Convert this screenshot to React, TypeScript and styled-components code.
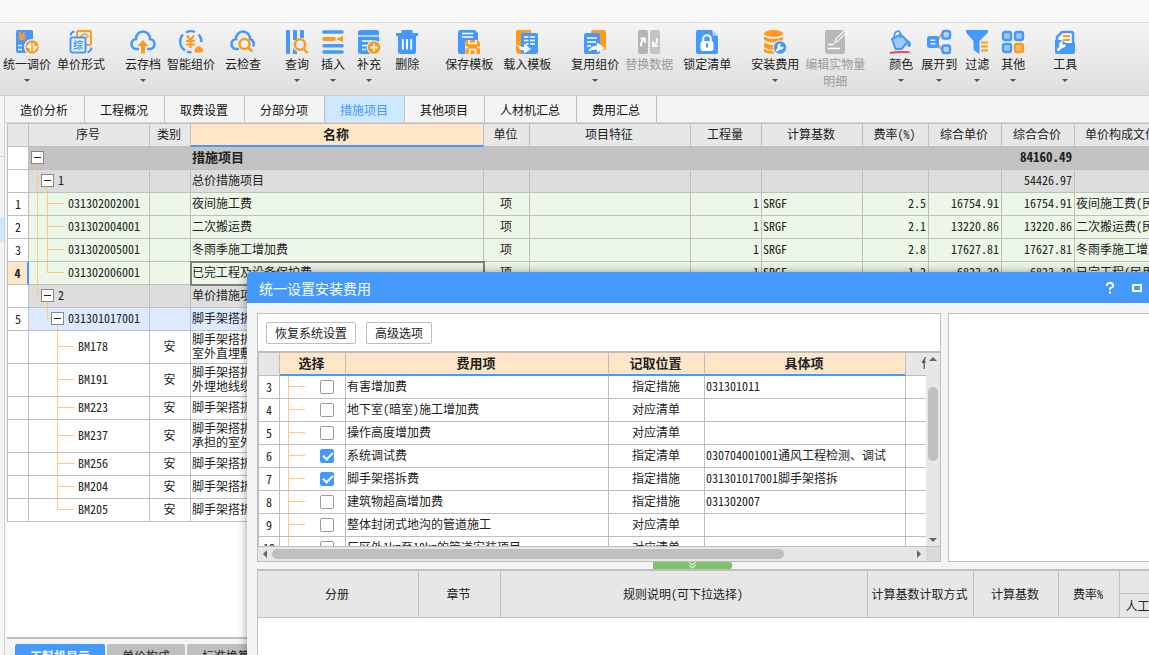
import React from 'react';
import styled, { createGlobalStyle, css } from 'styled-components';

const BLUE = '#4499ff';
const ORANGE = '#ff9a1f';
const LINE = '#bfbfbf';
const PEACH = '#ffe6c8';
const UI = '"Noto Sans CJK SC", sans-serif';
const GRID = '"Noto Sans Mono CJK SC", "Noto Sans CJK SC", monospace';

const GlobalStyle = createGlobalStyle`
  * { box-sizing: border-box; }
  body { margin: 0; overflow: hidden; font: 12px/17px ${UI}; color: #222; background: #f4f4f4; }
  button, input { font: inherit; color: inherit; margin: 0; }
`;

const App = styled.div`
  position: relative;
  display: flex;
  flex-direction: column;
  height: 100vh;
  overflow: hidden;
`;

const TitleStrip = styled.div`
  flex: none;
  height: 23px;
  background: #f8f8f8;
  border-bottom: 1px solid #d8d8d8;
`;

/* ---------- ribbon ---------- */

const Ribbon = styled.div`
  flex: none;
  display: flex;
  align-items: flex-start;
  height: 73px;
  padding: 7px 0 0 3px;
  overflow: hidden;
  background: linear-gradient(#f4f4f4, #dedede);
  border-bottom: 1px solid #cbcbcb;
`;

const RibbonButton = styled.button<{ $lead: number }>`
  flex: none;
  display: flex;
  flex-direction: column;
  align-items: center;
  margin-left: ${(p) => p.$lead}px;
  padding: 0;
  border: 0;
  background: none;
  line-height: 17px;
  white-space: pre;
  &:disabled { color: #9a9a9a; }
`;

const RibbonIcon = styled.svg`
  display: block;
  width: 24px;
  height: 24px;
  margin-bottom: 1px;
  overflow: visible;
`;

const Caret = styled.span`
  margin-top: 7px;
  border: 3px solid transparent;
  border-top-color: #555;
  border-bottom: 0;
`;

const icons: Record<string, React.ReactNode> = {
  adjust: (
    <>
      <rect x="1" y="0" width="17" height="23" rx="2" fill={BLUE} />
      <path d="M4 2l3 3.500L10 2M7 5.500v5M3.500 6h7M3.500 8.500h7" stroke={ORANGE} strokeWidth="1.800" fill="none" />
      <path d="M3 15.500h4M3 19.500h4" stroke="#fff" strokeWidth="1.400" />
      <circle cx="17" cy="17" r="8" fill="#efefef" />
      <circle cx="17" cy="17" r="6.800" fill={ORANGE} />
      <path d="M15.500 13v8M15.500 13l-3 4h3M18.500 21v-8M18.500 21l3-4h-3" stroke="#fff" strokeWidth="1.500" fill="#fff" />
    </>
  ),
  form: (
    <>
      <rect x="8" y="1" width="14" height="14" rx="1.500" fill="none" stroke={ORANGE} strokeWidth="2" />
      <path d="M11 7l4.500-3.500L20 7M12.500 7.500h6" stroke={ORANGE} strokeWidth="1.500" fill="none" />
      <rect x="1.500" y="7.500" width="15" height="15" rx="2" fill="#eef3fa" stroke={BLUE} strokeWidth="2" />
      <text x="4" y="19" fontSize="10" fontWeight="700" fill={BLUE} fontFamily={UI}>综</text>
      <path d="M1.500 5.500Q2 2 5.500 1.500M22.500 17.500Q22 21.500 18.500 22.500" stroke={BLUE} strokeWidth="2" fill="none" />
    </>
  ),
  cloudUp: (
    <>
      <path d="M8 19H6A5 5 0 0 1 5 9A7 7.500 0 0 1 19 9A5 5 0 0 1 18 19H16" fill="none" stroke={BLUE} strokeWidth="2.600" />
      <path d="M12 10l5.500 6H14v7.500h-4V16H6.500z" fill={ORANGE} />
    </>
  ),
  smart: (
    <>
      <path d="M6 20.500A10.500 10.500 0 0 1 4 4.500M7 2.500A10.500 10.500 0 0 1 16 2M19.500 4.500A10.500 10.500 0 0 1 22.500 12M8 21.700A10.500 10.500 0 0 0 12.500 22.300" fill="none" stroke={BLUE} strokeWidth="2.400" />
      <path d="M8 5.500l3.500 4.500L15 5.500M11.500 10v8M7 11h9M7 14.500h9" stroke={ORANGE} strokeWidth="2.200" fill="none" />
      <path d="M16.500 22.500a2.500 2.500 0 0 1 .5-4.500a3 3 0 0 1 5.500 0a2.500 2.500 0 0 1 .5 4.500z" fill={ORANGE} />
    </>
  ),
  cloudSearch: (
    <>
      <path d="M8 19H6A5 5 0 0 1 5 9A7 7.500 0 0 1 19 9A5 5 0 0 1 22 16.500" fill="none" stroke={BLUE} strokeWidth="2.600" />
      <circle cx="13.500" cy="14" r="5" fill="#f1f1f1" stroke={ORANGE} strokeWidth="2.500" />
      <path d="M17 17.500l4.500 4" stroke={ORANGE} strokeWidth="2.600" />
    </>
  ),
  query: (
    <>
      <rect x="1" y="0" width="4" height="24" rx="1" fill={BLUE} />
      <rect x="8" y="0" width="4" height="10" rx="1" fill={BLUE} />
      <rect x="15" y="0" width="4" height="8" rx="1" fill={BLUE} />
      <path d="M8 18.500v5.500h4v-2.500z" fill={BLUE} />
      <circle cx="15" cy="14.500" r="5.200" fill="none" stroke={ORANGE} strokeWidth="2.400" />
      <path d="M18.500 18.500l4 4.500" stroke={ORANGE} strokeWidth="2.600" />
    </>
  ),
  insert: (
    <>
      <path d="M3 2h18M3 15.700h18M3 22h18" stroke={BLUE} strokeWidth="3.600" strokeLinecap="round" />
      <path d="M3 9h10" stroke={ORANGE} strokeWidth="3.800" strokeLinecap="round" />
      <path d="M15 9l7-3.300v6.600z" fill={ORANGE} />
    </>
  ),
  supplement: (
    <>
      <rect x="1" y="0" width="21" height="24" rx="2.500" fill={BLUE} />
      <path d="M1 6h21" stroke="#f0f0f0" strokeWidth="1.300" />
      <path d="M5 11h10M5 15.500h5M5 19.500h4" stroke="#fff" strokeWidth="1.500" />
      <circle cx="17" cy="17.500" r="7.300" fill="#eee" />
      <circle cx="17" cy="17.500" r="6.300" fill={ORANGE} />
      <path d="M17 14v7M13.500 17.500h7" stroke="#fff" strokeWidth="1.900" />
    </>
  ),
  trash: (
    <>
      <path d="M1 4.500h22M6.500 1.500h11" stroke={BLUE} strokeWidth="3" />
      <path d="M3 4h18v17.500a2.500 2.500 0 0 1-2.500 2.500h-13A2.500 2.500 0 0 1 3 21.500z" fill={BLUE} />
      <path d="M7.800 9v10.500M12 9v10.500M16.200 9v10.500" stroke="#fff" strokeWidth="1.800" />
    </>
  ),
  save: (
    <>
      <path d="M3 0h15l3 3v9H8v12H3a2 2 0 0 1-2-2V2a2 2 0 0 1 2-2z" fill={BLUE} />
      <path d="M5 3.500h11M5 7h11" stroke="#fff" strokeWidth="1.500" />
      <path d="M8.500 10h12l2.500 2.500V24H8.500z" fill={ORANGE} />
      <path d="M12 10v3.500h7V10M8 17.500h3M20 17.500h3M12.500 24v-4.500h6V24" stroke="#fff" strokeWidth="1.600" fill="none" />
    </>
  ),
  load: (
    <>
      <path d="M3 0h13v24H5a4 4 0 0 1-4-4V2a2 2 0 0 1 2-2z" fill={ORANGE} />
      <rect x="6" y="3" width="17" height="21" rx="2" fill={BLUE} />
      <path d="M9 7h4.500M15 7h5M9 10.500h4.500M15 10.500h5M11 14h2.500M15 14h5" stroke="#fff" strokeWidth="1.600" />
      <path d="M2 13q1 4 7 4v-3.500l7 5.500-7 4.500v-3q-6 0-7-7.500z" fill="#fff" />
    </>
  ),
  reuse: (
    <>
      <rect x="8" y="0" width="15" height="20" rx="2" fill={ORANGE} />
      <rect x="1" y="3" width="16" height="21" rx="2" fill={BLUE} />
      <path d="M4 8h10M4 12h9M4 16h4" stroke="#fff" strokeWidth="1.600" />
      <path d="M5 21.500q3-6 9-6v-3l8 5.500-8 4.500v-3q-5 0-9 2z" fill="#fff" />
    </>
  ),
  replace: (
    <>
      <rect x="1" y="0" width="10" height="24" rx="2" fill="#b5b5b5" />
      <rect x="13" y="0" width="10" height="24" rx="2" fill="#c4c4c4" />
      <path d="M4 16.500q-.5-5 3-7.500M3.500 8.500H8V13M20 8q.5 5-3 7.500M20.500 16H16v-4.500" stroke="#fff" strokeWidth="1.900" fill="none" />
    </>
  ),
  lock: (
    <>
      <path d="M3 0h13.500L23 6.500V22a2 2 0 0 1-2 2H3a2 2 0 0 1-2-2V2a2 2 0 0 1 2-2z" fill={BLUE} />
      <path d="M17.500 0v5.500H23z" fill="#b9d8fb" />
      <path d="M8.200 12V9a3.800 3.800 0 0 1 7.600 0v3" fill="none" stroke="#fff" strokeWidth="2" />
      <rect x="5.500" y="11" width="13" height="10" rx="2.500" fill="#fff" />
      <path d="M12 13.500v4" stroke={BLUE} strokeWidth="2" />
    </>
  ),
  install: (
    <>
      <ellipse cx="10.500" cy="3.500" rx="9.500" ry="3.500" fill={ORANGE} />
      <path d="M1 6.500q9.500 5 19 0v3.500q-9.500 5-19 0zM1 12.500q9.500 5 19 0l-9 7.500q-6 0-10-3zM1 18.500q4 2.500 9 2.500l1 3q-6 0-10-2z" fill={ORANGE} />
      <circle cx="17" cy="17.500" r="7.200" fill="#ececec" />
      <circle cx="17" cy="17.500" r="6.200" fill={BLUE} />
      <path d="M13.500 21l3.500-3.500" stroke="#fff" strokeWidth="2.400" />
      <path d="M20.500 16.500a3 3 0 1 1-2.500-2.800l-1.200 2 1.500 1.500z" fill="#fff" />
    </>
  ),
  edit: (
    <>
      <rect x="2" y="0" width="20" height="24" rx="2.500" fill="#b8b8b8" />
      <path d="M5 14.500h6M5 18.500h12" stroke="#fff" strokeWidth="1.700" />
      <path d="M12 12.500l1-3.500L21 1l2 2-8 8z" fill="#b8b8b8" stroke="#f4f4f4" strokeWidth="1.300" />
    </>
  ),
  color: (
    <>
      <path d="M3 9L11.500 4.500l7.500 7-6.500 7.500H6.500z" fill="#9ccafb" stroke={BLUE} strokeWidth="2" strokeLinejoin="round" />
      <path d="M5 7.500Q5.500 1 9.500 1.200Q12 1.500 11.500 8" fill="none" stroke={BLUE} strokeWidth="1.800" />
      <path d="M20 11q2.800 4 .3 5.800-3-1-.3-5.800z" fill={BLUE} stroke={BLUE} />
      <path d="M1 22.500h21" stroke="#bdbdbd" strokeWidth="2" />
      <path d="M1 23Q9 21.500 20 22" stroke="#f0404a" strokeWidth="1.700" fill="none" />
    </>
  ),
  expand: (
    <>
      <path d="M10 10l5-6M10 14l5 6" stroke={ORANGE} strokeWidth="2" />
      <rect x="0" y="6" width="12" height="12" rx="2.500" fill={BLUE} />
      <path d="M3.500 10.300h5M3.500 13.700h5" stroke="#dcecff" strokeWidth="1.500" />
      <rect x="15.500" y="1" width="7.500" height="7.500" rx="2" fill="#b5d7fc" stroke={BLUE} strokeWidth="2.400" />
      <rect x="15.500" y="15.500" width="7.500" height="7.500" rx="2" fill="#b5d7fc" stroke={BLUE} strokeWidth="2.400" />
    </>
  ),
  filter: (
    <>
      <path d="M1 0h22v2.500L14.500 11v13L8.500 20v-9L1 2.500z" fill={BLUE} />
      <path d="M16 12.500h7M16 16.500h7M16 20.500h7" stroke={ORANGE} strokeWidth="1.900" />
    </>
  ),
  other: (
    <>
      <rect x="2" y="2" width="8" height="8" rx="2" fill="#9cc8fb" stroke={BLUE} strokeWidth="2.400" />
      <rect x="14" y="2" width="8" height="8" rx="2" fill="#9cc8fb" stroke={BLUE} strokeWidth="2.400" />
      <rect x="2" y="14" width="8" height="8" rx="2" fill="#9cc8fb" stroke={BLUE} strokeWidth="2.400" />
      <rect x="14" y="14" width="8" height="8" rx="2" fill="#ffc37a" stroke={ORANGE} strokeWidth="2.400" />
    </>
  ),
  tools: (
    <>
      <path d="M4 11V7l5-5h9a2 2 0 0 1 2 2v10" fill="#fff" stroke={BLUE} strokeWidth="2.600" />
      <path d="M10 6h7M10 10h7" stroke={ORANGE} strokeWidth="1.900" />
      <path d="M2 10h6l5 3h9v8.500a2.500 2.500 0 0 1-2.500 2.500h-15A2.500 2.500 0 0 1 2 21.500z" fill={BLUE} />
      <path d="M4.500 20.500l4-4" stroke="#fff" strokeWidth="2.600" />
      <path d="M12.500 14a3.200 3.200 0 1 1-3-2.500v2.500l1 1z" fill="#fff" />
    </>
  ),
};

type Command = { icon: string; label: string; lead: number; menu?: boolean; off?: boolean };
const commands: Command[] = [
  { icon: 'adjust', label: '统一调价', lead: 0, menu: true },
  { icon: 'form', label: '单价形式', lead: 6 },
  { icon: 'cloudUp', label: '云存档', lead: 20, menu: true },
  { icon: 'smart', label: '智能组价', lead: 6 },
  { icon: 'cloudSearch', label: '云检查', lead: 10 },
  { icon: 'query', label: '查询', lead: 24, menu: true },
  { icon: 'insert', label: '插入', lead: 12, menu: true },
  { icon: 'supplement', label: '补充', lead: 12, menu: true },
  { icon: 'trash', label: '删除', lead: 14 },
  { icon: 'save', label: '保存模板', lead: 26 },
  { icon: 'load', label: '载入模板', lead: 10 },
  { icon: 'reuse', label: '复用组价', lead: 20, menu: true },
  { icon: 'replace', label: '替换数据', lead: 6, off: true },
  { icon: 'lock', label: '锁定清单', lead: 10 },
  { icon: 'install', label: '安装费用', lead: 20, menu: true },
  { icon: 'edit', label: '编辑实物量\n明细', lead: 6, off: true },
  { icon: 'color', label: '颜色', lead: 24, menu: true },
  { icon: 'expand', label: '展开到', lead: 8, menu: true },
  { icon: 'filter', label: '过滤', lead: 8, menu: true },
  { icon: 'other', label: '其他', lead: 12, menu: true },
  { icon: 'tools', label: '工具', lead: 28, menu: true },
];

/* ---------- workspace ---------- */

const Workspace = styled.div`
  flex: 1;
  display: flex;
  min-height: 0;
`;

const SideRail = styled.aside`
  flex: none;
  width: 5px;
  border-right: 1px solid #d0d0d0;
`;
const RailHead = styled.div`
  height: 61px;
  border-bottom: 1px solid #d0d0d0;
`;
const RailCurrent = styled.div`
  height: 25px;
  margin-top: 60px;
  background: #cde8ff;
`;

const Main = styled.main`
  flex: 1;
  min-width: 0;
  display: flex;
  flex-direction: column;
`;

const Tabs = styled.nav`
  flex: none;
  display: flex;
  height: 27px;
  border-bottom: 1px solid #d4d4d4;
`;
const Tab = styled.button<{ $active?: boolean }>`
  flex: none;
  padding: 0 16px 0 15px;
  border: 0;
  border-right: 1px solid ${LINE};
  background: ${(p) => (p.$active ? '#cde8ff' : '#f4f4f4')};
  color: ${(p) => (p.$active ? BLUE : '#111')};
`;

const Sheet = styled.section`
  flex: 1;
  min-height: 0;
  margin-left: 2px;
  overflow: hidden;
  background: #fff;
  border-bottom: 2px solid ${LINE};
`;

const Table = styled.table`
  table-layout: fixed;
  width: 0;
  border-spacing: 0;
  border-left: 1px solid ${LINE};
  font: 12px/14px ${GRID};
`;
const SheetTable = styled(Table)`
  border-top: 1px solid ${LINE};
`;

const Th = styled.th<{ $hot?: boolean }>`
  height: 23px;
  padding: 0 2px 2px 0;
  overflow: hidden;
  white-space: nowrap;
  font-weight: 400;
  background: #e7e7e7;
  border-right: 1px solid ${LINE};
  border-bottom: 1px solid ${LINE};
  ${(p) => p.$hot && css`
    font-size: 13px;
    font-weight: 700;
    background: ${PEACH};
    border-bottom: 2px solid ${BLUE};
  `}
`;

type Tone = 'root' | 'group' | 'item' | 'current' | 'plain';
const tones: Record<Tone, string> = {
  root: '#c3c3c3', group: '#dddddd', item: '#ecf7e8', current: '#dde9ff', plain: '#ffffff',
};

const Tr = styled.tr<{ $tone?: Tone; $tall?: boolean }>`
  height: ${(p) => (p.$tall ? 33 : 23)}px;
  background: ${(p) => tones[p.$tone ?? 'plain']};
  ${(p) => p.$tone === 'root' && 'font-size: 13px; font-weight: 700;'}
`;

const Td = styled.td<{ $align?: string; $selected?: boolean }>`
  padding: 0 2px 2px 1px;
  overflow: hidden;
  white-space: pre;
  text-align: ${(p) => p.$align ?? 'left'};
  border-right: 1px solid ${LINE};
  border-bottom: 1px solid ${LINE};
  ${(p) => p.$selected && 'outline: 2px solid #7f7f7f; outline-offset: -1px;'}
`;

const RowHead = styled.th<{ $active?: boolean }>`
  padding: 0;
  font-weight: ${(p) => (p.$active ? 700 : 400)};
  background: ${(p) => (p.$active ? PEACH : '#fff')};
  border-right: ${(p) => (p.$active ? `2px solid ${BLUE}` : `1px solid ${LINE}`)};
  border-bottom: 1px solid ${LINE};
`;

const TreeTd = styled(Td)`
  padding: 0;
`;
const Tree = styled.div<{ $tall?: boolean }>`
  display: flex;
  align-items: center;
  height: ${(p) => (p.$tall ? 32 : 22)}px;
  padding-left: 2px;
`;
const Code = styled.span`
  margin-bottom: 2px;
`;

type GuideKind = 'none' | 'through' | 'tee' | 'end';
const Guide = styled.span<{ $kind: GuideKind }>`
  align-self: stretch;
  width: 10px;
  background-repeat: no-repeat;
  background-image: linear-gradient(#ffc97d, #ffc97d), linear-gradient(#ffc97d, #ffc97d);
  background-position: 6px 0, 6px calc(50% - 1px);
  background-size:
    ${(p) => (p.$kind === 'none' ? '0 0' : p.$kind === 'end' ? '1px 50%' : '1px 100%')},
    ${(p) => (p.$kind === 'tee' || p.$kind === 'end' ? '4px 1px' : '0 0')};
`;
const Dash = styled.span`
  width: 13px;
  height: 1px;
  margin: 0 4px 1px 0;
  background: #ffc97d;
`;
const Branch = styled.span`
  align-self: stretch;
  display: flex;
  align-items: center;
  width: 13px;
  margin-right: 4px;
  background: linear-gradient(#ffc97d, #ffc97d) no-repeat 6px 100% / 1px 50%;
`;
const Toggle = styled.button`
  width: 13px;
  height: 13px;
  margin-bottom: 1px;
  padding: 0;
  border: 1px solid #888;
  background: linear-gradient(#222, #222) no-repeat center / 7px 1px #fff;
`;

type Row = {
  no?: string; code?: string; guides: GuideKind[]; branch?: boolean; tone: Tone; tall?: boolean;
  kind?: string; name: string; unit?: string; qty?: string; base?: string; rate?: string;
  price?: string; total?: string; file?: string; selected?: boolean;
};
const rows: Row[] = [
  { guides: [], branch: true, tone: 'root', name: '措施项目', total: '84160.49' },
  { code: '1', guides: ['tee'], branch: true, tone: 'group', name: '总价措施项目', total: '54426.97' },
  { no: '1', code: '031302002001', guides: ['through', 'tee'], tone: 'item', name: '夜间施工费', unit: '项', qty: '1', base: 'SRGF', rate: '2.5', price: '16754.91', total: '16754.91', file: '夜间施工费(民用)' },
  { no: '2', code: '031302004001', guides: ['through', 'tee'], tone: 'item', name: '二次搬运费', unit: '项', qty: '1', base: 'SRGF', rate: '2.1', price: '13220.86', total: '13220.86', file: '二次搬运费(民用)' },
  { no: '3', code: '031302005001', guides: ['through', 'tee'], tone: 'item', name: '冬雨季施工增加费', unit: '项', qty: '1', base: 'SRGF', rate: '2.8', price: '17627.81', total: '17627.81', file: '冬雨季施工增加费' },
  { no: '4', code: '031302006001', guides: ['through', 'end'], tone: 'item', name: '已完工程及设备保护费', unit: '项', qty: '1', base: 'SRGF', rate: '1.2', price: '6823.39', total: '6823.39', file: '已完工程(民用)', selected: true },
  { code: '2', guides: ['end'], branch: true, tone: 'group', name: '单价措施项目' },
  { no: '5', code: '031301017001', guides: ['none', 'end'], branch: true, tone: 'current', name: '脚手架搭拆' },
  { code: 'BM178', guides: ['none', 'none', 'tee'], tone: 'plain', tall: true, kind: '安', name: '脚手架搭拆\n室外直埋敷设' },
  { code: 'BM191', guides: ['none', 'none', 'tee'], tone: 'plain', tall: true, kind: '安', name: '脚手架搭拆\n外埋地线缆' },
  { code: 'BM223', guides: ['none', 'none', 'tee'], tone: 'plain', kind: '安', name: '脚手架搭拆' },
  { code: 'BM237', guides: ['none', 'none', 'tee'], tone: 'plain', tall: true, kind: '安', name: '脚手架搭拆\n承担的室外' },
  { code: 'BM256', guides: ['none', 'none', 'tee'], tone: 'plain', kind: '安', name: '脚手架搭拆' },
  { code: 'BM204', guides: ['none', 'none', 'tee'], tone: 'plain', kind: '安', name: '脚手架搭拆' },
  { code: 'BM205', guides: ['none', 'none', 'end'], tone: 'plain', kind: '安', name: '脚手架搭拆' },
];
const sheetColumns: [string, number][] = [
  ['', 21], ['序号', 121], ['类别', 41], ['名称', 293], ['单位', 46], ['项目特征', 161],
  ['工程量', 71], ['计算基数', 101], ['费率(%)', 66], ['综合单价', 73], ['综合合价', 73], ['单价构成文件', 95],
];

const BottomTabs = styled.nav`
  flex: none;
  display: flex;
  gap: 2px;
  height: 16px;
  padding: 5px 0 0 10px;
  overflow: hidden;
`;
const BottomTab = styled.button<{ $active?: boolean }>`
  flex: none;
  height: 22px;
  padding: 0 15px;
  border: 0;
  border-radius: 2px 2px 0 0;
  background: ${(p) => (p.$active ? BLUE : LINE)};
  color: ${(p) => (p.$active ? '#fff' : '#222')};
  font-weight: ${(p) => (p.$active ? 700 : 400)};
`;

/* ---------- dialog ---------- */

const Dialog = styled.section`
  position: absolute;
  left: 247px;
  top: 272px;
  right: -32px;
  bottom: -100px;
  display: flex;
  flex-direction: column;
  overflow: hidden;
  background: #f4f4f4;
  border-radius: 4px 4px 0 0;
  box-shadow: 0 0 10px rgba(0, 0, 0, 0.4);
`;
const DialogTitle = styled.header`
  flex: none;
  display: flex;
  align-items: center;
  height: 31px;
  padding: 0 4px 0 12px;
  background: ${BLUE};
  color: #fff;
`;
const DialogName = styled.h2`
  flex: 1;
  margin: 0;
  padding-top: 1px;
  font-size: 14px;
  font-weight: 400;
`;
const WindowButton = styled.button`
  display: flex;
  justify-content: center;
  width: 27px;
  padding: 0;
  border: 0;
  background: none;
`;
const DialogBody = styled.div`
  flex: 1;
  padding: 10px 0 0 10px;
`;
const Panels = styled.div`
  display: flex;
  gap: 7px;
  height: 249px;
`;
const FeePanel = styled.div`
  flex: none;
  display: flex;
  flex-direction: column;
  width: 684px;
  background: #fff;
  border: 1px solid ${LINE};
`;
const DetailPanel = styled.div`
  flex: 1;
  background: #fff;
  border: 1px solid ${LINE};
`;
const FeeActions = styled.div`
  flex: none;
  display: flex;
  gap: 10px;
  height: 39px;
  padding: 8px;
  border-bottom: 2px solid ${LINE};
`;
const ActionButton = styled.button`
  height: 22px;
  padding: 0 8px;
  border: 1px solid ${LINE};
  border-radius: 2px;
  background: #fff;
  line-height: 20px;
`;
const FeeArea = styled.div`
  flex: 1;
  min-height: 0;
  display: flex;
`;
const FeeViewport = styled.div`
  flex: 1;
  min-width: 0;
  overflow: hidden;
`;
const VScroll = styled.div`
  flex: none;
  display: flex;
  flex-direction: column;
  align-items: center;
  width: 14px;
  padding: 4px 0;
  background: #e7e7e7;
`;
const VThumb = styled.div`
  width: 10px;
  height: 74px;
  margin: 26px 0 auto;
  border-radius: 5px;
  background: ${LINE};
`;
const HScroll = styled.div`
  flex: none;
  display: flex;
  align-items: center;
  height: 15px;
  padding-left: 5px;
  border-top: 1px solid ${LINE};
  background: #e7e7e7;
`;
const HThumb = styled.div`
  width: 512px;
  height: 10px;
  margin: 0 auto 0 5px;
  border-radius: 5px;
  background: ${LINE};
`;
const Corner = styled.div`
  width: 14px;
  height: 14px;
  margin-left: 5px;
  background: #dadada;
`;
const Arrow = styled.span<{ $dir: 'top' | 'bottom' | 'left' | 'right' }>`
  border: 4px solid transparent;
  border-${(p) => p.$dir}-width: 0;
  border-${(p) => ({ top: 'bottom', bottom: 'top', left: 'right', right: 'left' })[p.$dir]}-color: #666;
`;

const FeeCheck = styled.div`
  display: flex;
  align-items: center;
  height: 22px;
  padding-left: 2px;
`;
const Check = styled.input`
  appearance: none;
  width: 14px;
  height: 14px;
  margin-left: 11px;
  border: 1px solid #999;
  border-radius: 2px;
  background: #fff;
  &:checked {
    border-color: ${BLUE};
    background: ${BLUE};
  }
  &:checked::after {
    content: '';
    display: block;
    width: 4px;
    height: 8px;
    margin: 0 0 0 4px;
    border: solid #fff;
    border-width: 0 2px 2px 0;
    transform: rotate(45deg);
  }
`;

const fees: [string, boolean, string, string, string][] = [
  ['3', false, '有害增加费', '指定措施', '031301011'],
  ['4', false, '地下室(暗室)施工增加费', '对应清单', ''],
  ['5', false, '操作高度增加费', '对应清单', ''],
  ['6', true, '系统调试费', '指定清单', '030704001001通风工程检测、调试'],
  ['7', true, '脚手架搭拆费', '指定措施', '031301017001脚手架搭拆'],
  ['8', false, '建筑物超高增加费', '指定措施', '031302007'],
  ['9', false, '整体封闭式地沟的管道施工', '对应清单', ''],
  ['10', false, '厂区外1km至10km的管道安装项目', '对应清单', ''],
];

const Splitter = styled.div`
  height: 7px;
  padding-left: 396px;
`;
const SplitHandle = styled.button`
  display: flex;
  justify-content: center;
  width: 79px;
  height: 7px;
  padding: 0;
  border: 0;
  border-radius: 0 2px 2px 0;
  background: #80c26a;
`;
const RulePanel = styled.div`
  height: 200px;
  overflow: hidden;
  background: #fff;
  border-top: 2px solid ${LINE};
  border-left: 1px solid ${LINE};
`;
const RuleTable = styled(Table)`
  border-left: 0;
`;
const RuleTh = styled(Th)`
  height: 24px;
  padding: 0 2px 0 0;
`;

const Columns = ({ widths }: { widths: number[] }) => (
  <colgroup>
    {widths.map((width, i) => <col key={i} width={width} />)}
  </colgroup>
);

const FeeDialog = () => (
  <Dialog role="dialog" aria-labelledby="fee-title">
    <DialogTitle>
      <DialogName id="fee-title">统一设置安装费用</DialogName>
      <WindowButton aria-label="帮助">
        <svg width="10" height="12" viewBox="0 0 10 12"><path d="M2 4V2.500L3.500 1h3L8 2.500v2L5 6.500V8M5 9.500v2" fill="none" stroke="#fff" strokeWidth="2" /></svg>
      </WindowButton>
      <WindowButton aria-label="最大化">
        <svg width="10" height="8" viewBox="0 0 10 8"><rect x="1" y="1" width="8" height="6" fill="none" stroke="#fff" strokeWidth="2" /></svg>
      </WindowButton>
      <WindowButton aria-label="关闭">
        <svg width="10" height="10" viewBox="0 0 10 10"><path d="M1 1l8 8M9 1L1 9" stroke="#fff" strokeWidth="2" /></svg>
      </WindowButton>
    </DialogTitle>
    <DialogBody>
      <Panels>
        <FeePanel>
          <FeeActions>
            <ActionButton>恢复系统设置</ActionButton>
            <ActionButton>高级选项</ActionButton>
          </FeeActions>
          <FeeArea>
            <FeeViewport>
              <Table>
                <Columns widths={[21, 66, 263, 96, 201, 82]} />
                <thead>
                  <tr>
                    <Th /><Th $hot>选择</Th><Th $hot>费用项</Th><Th $hot>记取位置</Th><Th $hot>具体项</Th><Th>作用范围</Th>
                  </tr>
                </thead>
                <tbody>
                  {fees.map(([no, on, name, place, item]) => (
                    <Tr key={no}>
                      <RowHead scope="row">{no}</RowHead>
                      <TreeTd>
                        <FeeCheck>
                          <Guide $kind="tee" />
                          <Dash />
                          <Check type="checkbox" defaultChecked={on} aria-label={name} />
                        </FeeCheck>
                      </TreeTd>
                      <Td>{name}</Td>
                      <Td $align="center">{place}</Td>
                      <Td>{item}</Td>
                      <Td />
                    </Tr>
                  ))}
                </tbody>
              </Table>
            </FeeViewport>
            <VScroll><Arrow $dir="top" /><VThumb /><Arrow $dir="bottom" /></VScroll>
          </FeeArea>
          <HScroll><Arrow $dir="left" /><HThumb /><Arrow $dir="right" /><Corner /></HScroll>
        </FeePanel>
        <DetailPanel />
      </Panels>
      <Splitter>
        <SplitHandle aria-label="收起">
          <svg width="9" height="7" viewBox="0 0 9 7"><path d="M1 0l3.500 3L8 0M1 3l3.500 3L8 3" fill="none" stroke="#d8f0cf" strokeWidth="1.200" /></svg>
        </SplitHandle>
      </Splitter>
      <RulePanel>
        <RuleTable>
          <Columns widths={[161, 82, 367, 106, 85, 61, 50, 50]} />
          <thead>
            <tr>
              <RuleTh rowSpan={2}>分册</RuleTh>
              <RuleTh rowSpan={2}>章节</RuleTh>
              <RuleTh rowSpan={2}>规则说明(可下拉选择)</RuleTh>
              <RuleTh rowSpan={2}>计算基数计取方式</RuleTh>
              <RuleTh rowSpan={2}>计算基数</RuleTh>
              <RuleTh rowSpan={2}>费率%</RuleTh>
              <Th colSpan={2} />
            </tr>
            <tr><RuleTh>人工费</RuleTh><RuleTh /></tr>
          </thead>
        </RuleTable>
      </RulePanel>
    </DialogBody>
  </Dialog>
);

export default function CostPlanner() {
  return (
    <App>
      <GlobalStyle />
      <TitleStrip />
      <Ribbon role="toolbar">
        {commands.map((c) => (
          <RibbonButton key={c.icon} $lead={c.lead} disabled={c.off}>
            <RibbonIcon viewBox="0 0 24 24" aria-hidden="true">{icons[c.icon]}</RibbonIcon>
            {c.label}
            {c.menu && <Caret />}
          </RibbonButton>
        ))}
      </Ribbon>
      <Workspace>
        <SideRail><RailHead /><RailCurrent /></SideRail>
        <Main>
          <Tabs>
            {['造价分析', '工程概况', '取费设置', '分部分项', '措施项目', '其他项目', '人材机汇总', '费用汇总'].map((t) => (
              <Tab key={t} $active={t === '措施项目'}>{t}</Tab>
            ))}
          </Tabs>
          <Sheet>
            <SheetTable>
              <Columns widths={sheetColumns.map((c) => c[1])} />
              <thead>
                <tr>{sheetColumns.map(([t]) => <Th key={t} $hot={t === '名称'}>{t}</Th>)}</tr>
              </thead>
              <tbody>
                {rows.map((r, i) => (
                  <Tr key={i} $tone={r.tone} $tall={r.tall}>
                    <RowHead scope="row" $active={r.selected}>{r.no}</RowHead>
                    <TreeTd>
                      <Tree $tall={r.tall}>
                        {r.guides.map((g, k) => <Guide key={k} $kind={g} />)}
                        {r.branch ? <Branch><Toggle aria-label="折叠" /></Branch> : <Dash />}
                        <Code>{r.code}</Code>
                      </Tree>
                    </TreeTd>
                    <Td $align="center">{r.kind}</Td>
                    <Td $selected={r.selected}>{r.name}</Td>
                    <Td $align="center">{r.unit}</Td>
                    <Td />
                    <Td $align="right">{r.qty}</Td>
                    <Td>{r.base}</Td>
                    <Td $align="right">{r.rate}</Td>
                    <Td $align="right">{r.price}</Td>
                    <Td $align="right">{r.total}</Td>
                    <Td>{r.file}</Td>
                  </Tr>
                ))}
              </tbody>
            </SheetTable>
          </Sheet>
          <BottomTabs>
            <BottomTab $active>工料机显示</BottomTab>
            <BottomTab>单价构成</BottomTab>
            <BottomTab>标准换算</BottomTab>
          </BottomTabs>
        </Main>
      </Workspace>
      <FeeDialog />
    </App>
  );
}
